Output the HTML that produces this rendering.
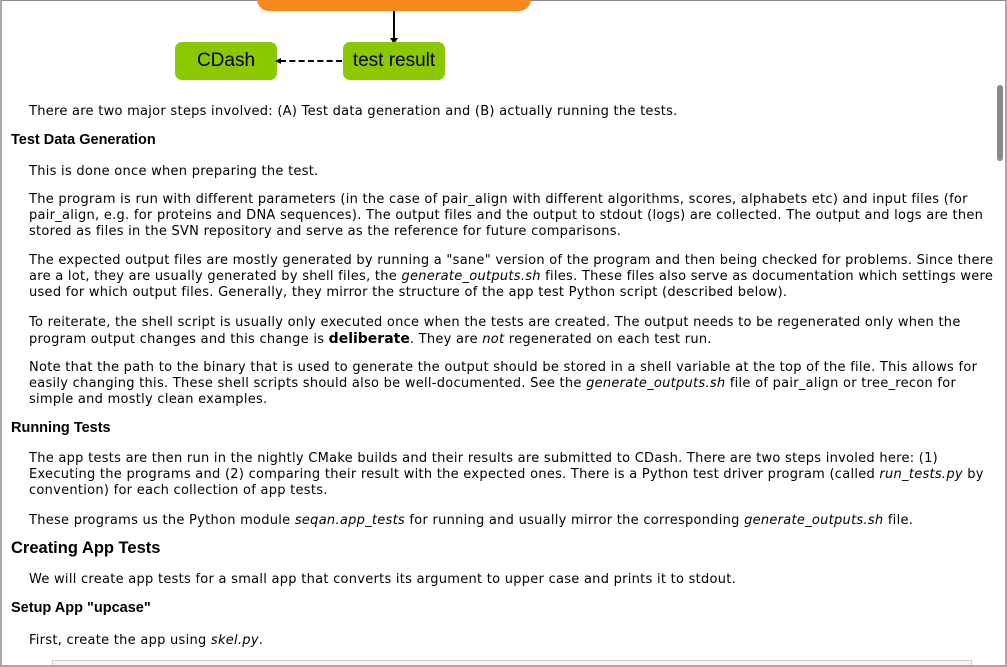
<!DOCTYPE html>
<html><head><meta charset="utf-8"><style>
html,body{margin:0;padding:0;overflow:hidden;}
body{width:1007px;height:667px;position:relative;overflow:hidden;background:#fff;font-family:"DejaVu Sans","Liberation Sans",sans-serif;font-size:13px;letter-spacing:0.27px;color:#000;}
.l{position:absolute;left:29px;white-space:nowrap;line-height:16px;height:16px;margin-top:2px;}
.h{position:absolute;left:11px;white-space:nowrap;font-family:"Liberation Sans",sans-serif;font-weight:bold;font-size:14.5px;line-height:18px;letter-spacing:0;}
.h2{font-size:16.5px;}
.box{position:absolute;background:#8cc800;border-radius:7px;font-family:"Liberation Sans",sans-serif;font-size:19px;letter-spacing:0;text-align:center;line-height:38px;height:38px;}
</style></head><body>
<div style="position:absolute;left:52px;top:660px;width:918px;height:6px;background:#f5f5f5;border:1px solid #ccc;border-bottom:none"></div>
<div style="position:absolute;left:0;top:0;width:1007px;height:1px;background:#888"></div>
<div style="position:absolute;left:0;top:0;width:2px;height:667px;background:#a8a8a8"></div>
<div style="position:absolute;right:0;top:0;width:2px;height:667px;background:#a8a8a8"></div>
<div style="position:absolute;left:0;top:665px;width:1007px;height:2px;background:#a8a8a8"></div>
<div style="position:absolute;left:997px;top:85px;width:6px;height:76px;background:#8a8a8a;border-radius:3px"></div>

<div style="position:absolute;left:257px;top:-20px;width:274px;height:31px;background:#f7881e;border-radius:12px"></div>
<div style="position:absolute;left:393px;top:11px;width:2px;height:30px;background:#000"></div>
<div style="position:absolute;left:390px;top:38px;width:0;height:0;border-left:4px solid transparent;border-right:4px solid transparent;border-top:6px solid #000"></div>
<div class="box" style="left:175px;top:42px;width:102px;">CDash</div>
<div class="box" style="left:343px;top:42px;width:102px;">test result</div>
<div style="position:absolute;left:280px;top:60px;width:62px;border-top:2px dashed #000"></div>
<div style="position:absolute;left:275px;top:58px;width:0;height:0;border-top:3px solid transparent;border-bottom:3px solid transparent;border-right:6px solid #000"></div>

<div class="l" style="top:102px">There are two major steps involved: (A) Test data generation and (B) actually running the tests.</div>
<div class="h" style="top:131px">Test Data Generation</div>
<div class="l" style="top:162px">This is done once when preparing the test.</div>
<div class="l" style="top:190px">The program is run with different parameters (in the case of pair_align with different algorithms, scores, alphabets etc) and input files (for</div>
<div class="l" style="top:206px">pair_align, e.g. for proteins and DNA sequences). The output files and the output to stdout (logs) are collected. The output and logs are then</div>
<div class="l" style="top:222px">stored as files in the SVN repository and serve as the reference for future comparisons.</div>
<div class="l" style="top:251px">The expected output files are mostly generated by running a "sane" version of the program and then being checked for problems. Since there</div>
<div class="l" style="top:267px">are a lot, they are usually generated by shell files, the <i>generate_outputs.sh</i> files. These files also serve as documentation which settings were</div>
<div class="l" style="top:283px">used for which output files. Generally, they mirror the structure of the app test Python script (described below).</div>
<div class="l" style="top:313px">To reiterate, the shell script is usually only executed once when the tests are created. The output needs to be regenerated only when the</div>
<div class="l" style="top:329px">program output changes and this change is <b style="font-size:14px;letter-spacing:0">deliberate</b>. They are <i>not</i> regenerated on each test run.</div>
<div class="l" style="top:358px">Note that the path to the binary that is used to generate the output should be stored in a shell variable at the top of the file. This allows for</div>
<div class="l" style="top:374px">easily changing this. These shell scripts should also be well-documented. See the <i>generate_outputs.sh</i> file of pair_align or tree_recon for</div>
<div class="l" style="top:390px">simple and mostly clean examples.</div>
<div class="h" style="top:419px">Running Tests</div>
<div class="l" style="top:449px">The app tests are then run in the nightly CMake builds and their results are submitted to CDash. There are two steps involed here: (1)</div>
<div class="l" style="top:465px">Executing the programs and (2) comparing their result with the expected ones. There is a Python test driver program (called <i>run_tests.py</i> by</div>
<div class="l" style="top:481px">convention) for each collection of app tests.</div>
<div class="l" style="top:511px">These programs us the Python module <i>seqan.app_tests</i> for running and usually mirror the corresponding <i>generate_outputs.sh</i> file.</div>
<div class="h h2" style="top:539px">Creating App Tests</div>
<div class="l" style="top:570px">We will create app tests for a small app that converts its argument to upper case and prints it to stdout.</div>
<div class="h" style="top:599px">Setup App "upcase"</div>
<div class="l" style="top:631px">First, create the app using <i>skel.py</i>.</div>
</body></html>
